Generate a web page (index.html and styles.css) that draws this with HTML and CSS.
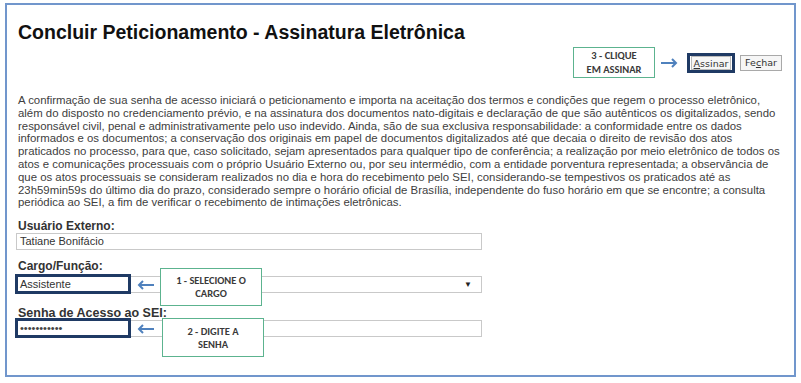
FILE: index.html
```html
<!DOCTYPE html>
<html lang="pt-BR">
<head>
    <meta charset="UTF-8">
    <title>Concluir Peticionamento - Assinatura Eletrônica</title>
    <link rel="stylesheet" href="styles.css">
</head>
<body>
    <div class="frame">
        <h1 class="title">Concluir Peticionamento - Assinatura Eletrônica</h1>

        <div class="toolbar">
            <div class="note note-sign">3 - CLIQUE<br>EM ASSINAR</div>
            <svg class="arrow arrow-right" width="18" height="10" viewBox="0 0 18 10">
                <path d="M1 5H16M12 1L16 5L12 9" />
            </svg>
            <span class="mark mark-btn"><button class="btn"><u>A</u>ssinar</button></span>
            <button class="btn">Fe<u>c</u>har</button>
        </div>

        <p class="terms">
            <span>A confirmação de sua senha de acesso iniciará o peticionamento e importa na aceitação dos termos e condições que regem o processo eletrônico,</span>
            <span>além do disposto no credenciamento prévio, e na assinatura dos documentos nato-digitais e declaração de que são autênticos os digitalizados, sendo</span>
            <span>responsável civil, penal e administrativamente pelo uso indevido. Ainda, são de sua exclusiva responsabilidade: a conformidade entre os dados</span>
            <span>informados e os documentos; a conservação dos originais em papel de documentos digitalizados até que decaia o direito de revisão dos atos</span>
            <span>praticados no processo, para que, caso solicitado, sejam apresentados para qualquer tipo de conferência; a realização por meio eletrônico de todos os</span>
            <span>atos e comunicações processuais com o próprio Usuário Externo ou, por seu intermédio, com a entidade porventura representada; a observância de</span>
            <span>que os atos processuais se consideram realizados no dia e hora do recebimento pelo SEI, considerando-se tempestivos os praticados até as</span>
            <span>23h59min59s do último dia do prazo, considerado sempre o horário oficial de Brasília, independente do fuso horário em que se encontre; a consulta</span>
            <span>periódica ao SEI, a fim de verificar o recebimento de intimações eletrônicas.</span>
        </p>

        <div class="field">
            <label class="field-label">Usuário Externo:</label>
            <div class="field-box">
                <div class="input">Tatiane Bonifácio</div>
            </div>
        </div>

        <div class="field field-cargo">
            <label class="field-label">Cargo/Função:</label>
            <div class="field-box">
                <div class="input select">Assistente<span class="caret">&#9660;</span></div>
                <span class="mark mark-field"></span>
                <svg class="arrow arrow-left" width="18" height="10" viewBox="0 0 18 10">
                    <path d="M17 5H2M6 1L2 5L6 9" />
                </svg>
                <div class="note note-field note-cargo">1 - SELECIONE O<br>CARGO</div>
            </div>
        </div>

        <div class="field field-senha">
            <label class="field-label">Senha de Acesso ao SEI:</label>
            <div class="field-box">
                <div class="input password">&bull;&bull;&bull;&bull;&bull;&bull;&bull;&bull;&bull;&bull;&bull;</div>
                <span class="mark mark-field"></span>
                <svg class="arrow arrow-left" width="18" height="10" viewBox="0 0 18 10">
                    <path d="M17 5H2M6 1L2 5L6 9" />
                </svg>
                <div class="note note-field note-senha">2 - DIGITE A<br>SENHA</div>
            </div>
        </div>
    </div>
</body>
</html>
```

FILE: styles.css
```css
body {
    margin: 0;
    font-family: Arial, "Liberation Sans", sans-serif;
    background-color: #fff;
    color: #333;
}

.frame {
    margin: 3px 0 0 5px;
    width: 791px;
    height: 374px;
    box-sizing: border-box;
    border: 2px solid #7196cc;
    padding: 16px 11px 0 11px;
}

.title {
    margin: 0;
    font-size: 19.5px;
    line-height: 22px;
    font-weight: bold;
    color: #111;
}

/* Button row with the "3 - clique" hint */
.toolbar {
    display: flex;
    justify-content: flex-end;
    align-items: center;
    height: 31px;
    margin-top: 4px;
    padding-right: 1px;
}

.note {
    box-sizing: border-box;
    border: 1.5px solid #5cb38f;
    background-color: #fff;
    font-family: Carlito, Lato, "Open Sans", sans-serif;
    font-weight: bold;
    font-size: 10.5px;
    line-height: 13px;
    color: #3a3a3a;
    text-align: center;
    display: flex;
    flex-direction: column;
    justify-content: center;
}

.note-sign {
    width: 82px;
    height: 31px;
    margin-right: 5px;
    line-height: 14px;
}

.arrow path {
    fill: none;
    stroke: #4f81bd;
    stroke-width: 2;
}

.arrow-right {
    margin-right: 9px;
}

.mark {
    box-sizing: border-box;
    border: 3px solid #1f3a64;
}

.mark-btn {
    display: flex;
    align-items: center;
    justify-content: center;
    width: 48px;
    height: 20px;
    margin-right: 5px;
}

.btn {
    font-family: Tahoma, "DejaVu Sans", Arial, sans-serif;
    font-size: 9.5px;
    color: #333;
    background-color: #f6f6f6;
    border: 1px solid #a9a9a9;
    border-radius: 0;
    padding: 0 4px;
    height: 16px;
    line-height: 14px;
}

.mark-btn .btn {
    height: 14px;
    border-color: #bbb;
    padding: 0 2px;
}

.toolbar > .btn {
    width: 42px;
    padding: 0 2px;
}

.terms {
    margin: 16px 0 0;
    font-size: 11.4px;
    line-height: 12.8px;
    color: #404040;
}

.terms span {
    display: block;
    white-space: nowrap;
}

/* Form */
.field {
    margin-top: 10px;
}

.field + .field {
    margin-top: 9px;
}

.field-label {
    display: block;
    font-size: 12px;
    font-weight: bold;
    line-height: 14px;
    color: #333;
}

.field-cargo .field-label {
    margin-bottom: 3px;
}

.field + .field-senha {
    margin-top: 13px;
}

.field-senha .field-label {
    font-size: 12.5px;
}

.field-box {
    position: relative;
    width: 466px;
    margin-left: -2px;
}

.input {
    box-sizing: border-box;
    height: 17px;
    border: 1px solid #c9c9c9;
    padding: 0 3px;
    font-size: 11px;
    line-height: 15px;
    color: #333;
    background-color: #fff;
}

.select {
    display: flex;
    justify-content: space-between;
}

.caret {
    font-size: 8px;
    color: #222;
    padding-right: 6px;
}

.password {
    color: #444;
}

/* Annotation overlays */
.mark-field {
    position: absolute;
    left: -1px;
    top: -2px;
    width: 116px;
    height: 20px;
}

.arrow-left {
    position: absolute;
    left: 121px;
    top: 4px;
}

.note-field {
    position: absolute;
    width: 102px;
}

.note-cargo {
    left: 144px;
    top: -8px;
    height: 38px;
}

.note-senha {
    left: 146px;
    top: -2px;
    height: 39px;
}
```
